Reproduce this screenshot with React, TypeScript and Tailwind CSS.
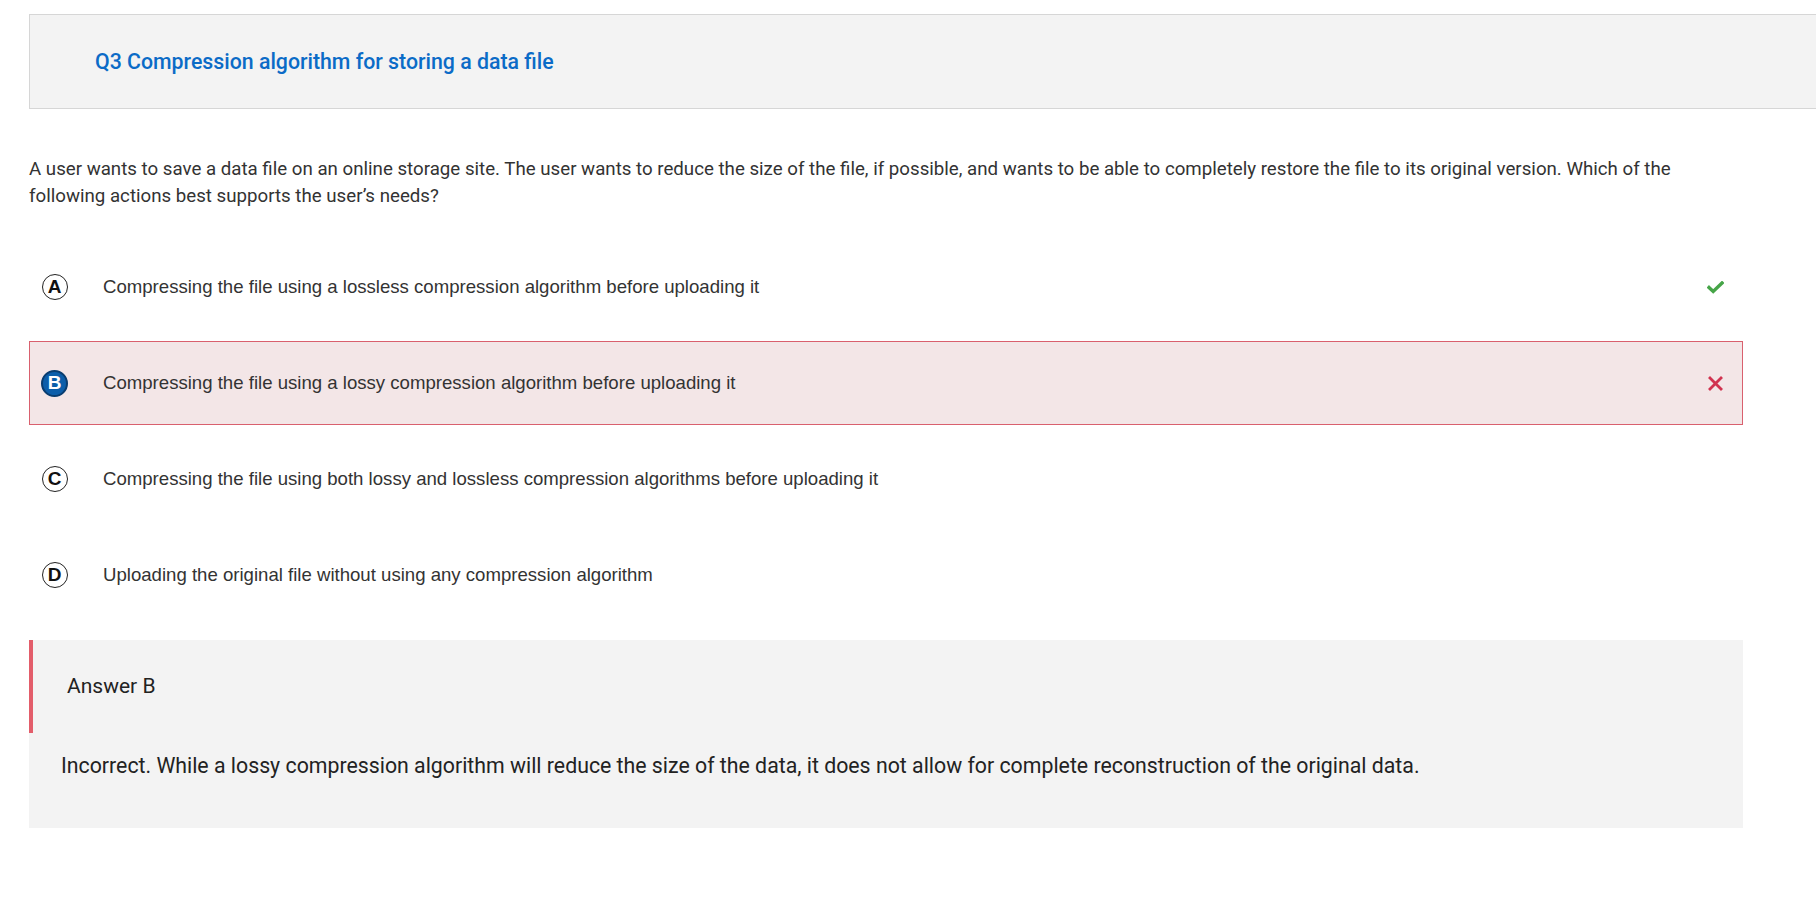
const options = [
  { letter: "A", text: "Compressing the file using a lossless compression algorithm before uploading it", state: "correct" },
  { letter: "B", text: "Compressing the file using a lossy compression algorithm before uploading it", state: "wrong" },
  { letter: "C", text: "Compressing the file using both lossy and lossless compression algorithms before uploading it", state: "none" },
  { letter: "D", text: "Uploading the original file without using any compression algorithm", state: "none" },
];

function CheckIcon() {
  return (
    <svg width="17" height="13" viewBox="0 0 17 13">
      <path d="M2 6.5 L6.2 10.5 L15 2" fill="none" stroke="#46a548" strokeWidth="3.4" strokeLinecap="square" />
    </svg>
  );
}

function CrossIcon() {
  return (
    <svg width="15" height="15" viewBox="0 0 15 15">
      <path d="M2 2 L13 13 M13 2 L2 13" fill="none" stroke="#d13350" strokeWidth="2.8" strokeLinecap="square" />
    </svg>
  );
}

function LetterBadge({ letter, selected }: { letter: string; selected: boolean }) {
  if (selected) {
    return (
      <div className="w-[27px] h-[27px] rounded-full bg-[#0c5eaa] border-2 border-[#093d70] flex items-center justify-center text-white text-[19px] font-bold font-['Liberation_Sans',Arial,sans-serif]">
        {letter}
      </div>
    );
  }
  return (
    <div className="w-[26px] h-[26px] rounded-full bg-white border border-[#222] flex items-center justify-center text-[#111] text-[19px] font-bold font-['Liberation_Sans',Arial,sans-serif]">
      {letter}
    </div>
  );
}

export default function App() {
  return (
    <div className="min-h-screen bg-white font-['Roboto',sans-serif] pt-[14px]">
      <div className="ml-[29px] h-[95px] border border-r-0 border-[#d6d6d6] bg-[#f3f3f3] flex items-center pl-[65px]">
        <h2 className="text-[21.3px] font-medium text-[#0b6bc7]">Q3 Compression algorithm for storing a data file</h2>
      </div>

      <p className="ml-[29px] w-[1700px] mt-[47px] text-[18.7px] leading-[27px] text-[#333]">
        A user wants to save a data file on an online storage site. The user wants to reduce the size of the file, if possible, and wants to be able to completely restore the file to its original version. Which of the following actions best supports the user’s needs?
      </p>

      <div className="ml-[29px] w-[1714px] mt-[35px] flex flex-col gap-[12px]">
        {options.map((o) => (
          <div
            key={o.letter}
            className={
              o.state === "wrong"
                ? "h-[84px] flex items-center border border-[#d9606e] bg-[#f3e6e7] pl-[11px] pr-[18px]"
                : "h-[84px] flex items-center border border-transparent pl-[11px] pr-[18px]"
            }
          >
            <div className="w-[27px] flex justify-center">
              <LetterBadge letter={o.letter} selected={o.state === "wrong"} />
            </div>
            <span className="ml-[35px] flex-1 text-[18.6px] text-[#333] font-['Liberation_Sans',Arial,sans-serif]">{o.text}</span>
            <div className="w-[17px] flex justify-center">
              {o.state === "correct" && <CheckIcon />}
              {o.state === "wrong" && <CrossIcon />}
            </div>
          </div>
        ))}
      </div>

      <div className="ml-[29px] w-[1714px] mt-[23px] bg-[#f3f3f3] pb-[49px]">
        <div className="h-[93px] border-l-4 border-[#e35d6a] pl-[34px] flex items-center text-[21px] text-[#222]">
          Answer B
        </div>
        <p className="mt-[19px] pl-[32px] text-[21.3px] leading-[27px] text-[#222]">
          Incorrect. While a lossy compression algorithm will reduce the size of the data, it does not allow for complete reconstruction of the original data.
        </p>
      </div>
    </div>
  );
}
